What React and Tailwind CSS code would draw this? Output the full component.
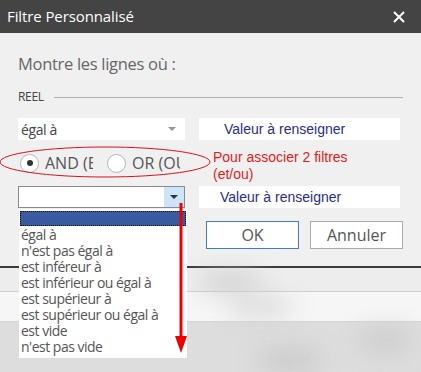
import React from "react";

const items = [
  "égal à",
  "n'est pas égal à",
  "est inféreur à",
  "est inférieur ou égal à",
  "est supérieur à",
  "est supérieur ou égal à",
  "est vide",
  "n'est pas vide",
];

function Radio({ checked, label }) {
  return (
    <div className="flex items-center gap-[6px]">
      <span className="w-[19px] h-[19px] rounded-full border border-[#b5b5b5] bg-white flex items-center justify-center">
        {checked && <span className="w-[6px] h-[6px] rounded-full bg-[#333]" />}
      </span>
      <span className="text-[16px] text-[#555] w-[48px] overflow-hidden whitespace-nowrap leading-[20px]">
        {label}
      </span>
    </div>
  );
}

export default function App() {
  return (
    <div
      className="relative w-[421px] h-[372px] overflow-hidden bg-[#e4e4e4]"
      style={{ fontFamily: '"Open Sans", sans-serif' }}
    >
      {/* Title bar */}
      <div className="h-[33px] bg-[#444444] flex items-center justify-between pl-[7px] pr-[16px]">
        <span className="text-white text-[15px] tracking-[-0.1px]">Filtre Personnalisé</span>
        <svg width="12" height="12" viewBox="0 0 12 12">
          <path d="M1 1L11 11M11 1L1 11" stroke="white" strokeWidth="2" />
        </svg>
      </div>

      {/* Dialog body */}
      <div className="h-[235px] bg-[#f0f0f0] border-b-2 border-[#3a3a3a] pl-[18px] pr-[18px] pt-[19px]">
        <div className="text-[16.5px] text-[#666] tracking-[-0.3px] leading-[24px]">Montre les lignes où :</div>
        <div className="flex items-center mt-[14px] h-[14px]">
          <span className="text-[12px] text-[#444] tracking-[-0.3px]">REEL</span>
          <div className="flex-1 h-px bg-[#b0b0b0] ml-[10px]" />
        </div>

        {/* Row 1 */}
        <div className="flex mt-[14px] h-[22px]" style={{ fontFamily: '"Liberation Sans", Arial, sans-serif' }}>
          <div className="w-[167px] bg-white flex items-center justify-between pl-[3px] pr-[9px] text-[14px] text-[#444] tracking-[-0.4px]" style={{ fontFamily: '"Open Sans", sans-serif' }}>
            <span>égal à</span>
            <span className="w-0 h-0 border-l-[4px] border-r-[4px] border-t-[4px] border-l-transparent border-r-transparent border-t-[#999]" />
          </div>
          <div className="ml-[14px] w-[201px] bg-white text-[14px] text-[#2b2d85] pl-[25px] flex items-center">
            Valeur à renseigner
          </div>
        </div>

        {/* Radio row */}
        <div className="flex items-start mt-[10px] h-[36px]">
          <div className="w-[195px] flex items-center gap-[14px] pl-[2px] pt-[3px]">
            <Radio checked label="AND (ET)" />
            <Radio label="OR (OU)" />
          </div>
          <div
            className="text-[14px] leading-[17px] text-[#e31b1b] -mt-[1px]"
            style={{ fontFamily: '"Liberation Sans", Arial, sans-serif' }}
          >
            Pour associer 2 filtres
            <br />
            (et/ou)
          </div>
        </div>

        {/* Row 2 */}
        <div className="flex h-[22px]" style={{ fontFamily: '"Liberation Sans", Arial, sans-serif' }}>
          <div className="w-[167px] bg-white border border-[#8a8a8a] flex justify-end">
            <div className="w-[20px] bg-[#cce4f7] flex items-center justify-center">
              <span className="w-0 h-0 border-l-[4px] border-r-[4px] border-t-[4px] border-l-transparent border-r-transparent border-t-[#333]" />
            </div>
          </div>
          <div className="ml-[14px] w-[201px] bg-white text-[14px] text-[#2b2d85] pl-[21px] flex items-center">
            Valeur à renseigner
          </div>
        </div>

        {/* Buttons */}
        <div className="flex justify-end gap-[11px] mt-[13px] text-[16px] text-[#555]">
          <button className="w-[93px] h-[28px] bg-white border border-[#3f7fb5]">OK</button>
          <button className="w-[93px] h-[28px] bg-white border border-[#aaaaaa]">Annuler</button>
        </div>
      </div>

      {/* Blurred background grid */}
      <div className="h-[104px] flex flex-col">
        <div className="h-[24px] bg-[#ededed] border-b border-[#cfcfcf]" />
        <div className="h-[30px] bg-[#f6f6f6] border-b border-[#d4d4d4]" />
        <div className="flex-1 bg-[#dddddd]" />
      </div>
      <div className="absolute left-[200px] top-[275px] w-[60px] h-[14px] rounded-full bg-[#c8c8c8] blur-md" />
      <div className="absolute left-[230px] top-[300px] w-[60px] h-[14px] rounded-full bg-[#cfcfcf] blur-md" />
      <div className="absolute left-[360px] top-[330px] w-[50px] h-[20px] rounded-full bg-[#cacaca] blur-md" />
      <div className="absolute left-[260px] top-[350px] w-[60px] h-[20px] rounded-full bg-[#c8c8c8] blur-md" />

      {/* Dropdown list (open) */}
      <div className="absolute left-[19px] top-[209px] w-[168px] h-[149px] bg-white pt-[2px]">
        <div className="mx-[1px] h-[15px] bg-[#3a5aa0] border border-dotted border-[#111]" />
        <div className="pl-[2px] pt-[1px]">
          {items.map((it) => (
            <div key={it} className="h-[16px] leading-[16px] text-[14px] text-[#555] tracking-[-0.5px] whitespace-nowrap">
              {it}
            </div>
          ))}
        </div>
      </div>

      {/* Annotations */}
      <svg className="absolute left-0 top-0 pointer-events-none" width="421" height="372">
        <ellipse cx="105" cy="162" rx="105" ry="15" fill="none" stroke="#d9121b" strokeWidth="1" />
        <line x1="181" y1="203" x2="181" y2="338" stroke="#ee0000" strokeWidth="3" />
        <path d="M175 336 L187 336 L181 353 Z" fill="#ee0000" />
      </svg>
    </div>
  );
}
